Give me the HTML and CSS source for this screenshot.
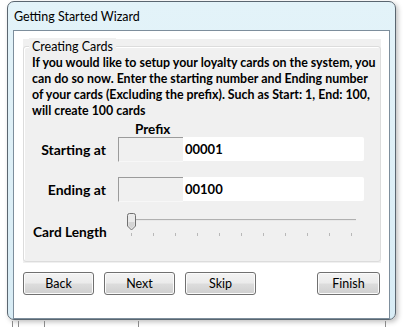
FILE: index.html
```html
<!DOCTYPE html>
<html lang="en">
<head>
  <meta charset="UTF-8">
  <title>Getting Started Wizard</title>
  <link rel="stylesheet" href="styles.css">
</head>
<body>

<div class="window">
  <div class="title-bar">Getting Started Wizard</div>

  <div class="client">
    <div class="group">
      <div class="group-frame">
        <div class="group-legend">Creating Cards</div>

        <p class="intro">
          If you would like to setup your loyalty cards on the system, you<br>
          can do so now. Enter the starting number and Ending number<br>
          of your cards (Excluding the prefix). Such as Start: 1, End: 100,<br>
          will create 100 cards
        </p>

        <div class="prefix-head">Prefix</div>

        <div class="field-row">
          <label class="field-label">Starting at</label>
          <div class="prefix-box"></div>
          <input class="value-box" type="text" value="00001">
        </div>

        <div class="field-row">
          <label class="field-label">Ending at</label>
          <div class="prefix-box"></div>
          <input class="value-box" type="text" value="00100">
        </div>

        <div class="slider-row">
          <span class="slider-label">Card Length</span>
          <div class="slider">
            <div class="slider-track"></div>
            <div class="slider-thumb">
              <svg width="11" height="18" viewBox="0 0 11 18">
                <path d="M1.5 2.5 Q1.5 0.5 3.5 0.5 L7.5 0.5 Q9.5 0.5 9.5 2.5 L9.5 13 L5.5 17 L1.5 13 Z" fill="#eaeaea" stroke="#707070"/>
                <path d="M2.5 9 L8.5 9 L8.5 12.6 L5.5 15.6 L2.5 12.6 Z" fill="#d4d4d4"/>
              </svg>
            </div>
            <div class="slider-ticks">
              <i></i><i></i><i></i><i></i><i></i><i></i><i></i><i></i><i></i><i></i><i></i>
            </div>
          </div>
        </div>
      </div>
    </div>

    <div class="buttons">
      <button class="btn">Back</button>
      <button class="btn">Next</button>
      <button class="btn">Skip</button>
      <span class="spacer"></span>
      <button class="btn btn-finish">Finish</button>
    </div>
  </div>
</div>

<div class="parent-strip">
  <i style="left:12px"></i><i style="left:18px"></i><i style="left:44px"></i><i style="left:138px"></i><i style="left:385px"></i>
</div>

</body>
</html>
```

FILE: styles.css
```css
body {
  margin: 0;
  background-color: #ffffff;
  font-family: Lato, "Noto Sans", sans-serif;
  font-size: 12.5px;
  color: #000;
  width: 413px;
  height: 327px;
  overflow: hidden;
}
.window {
  margin: 1px 0 0 7px;
  width: 387px;
  height: 317px;
  border: 1px solid #5a6670;
  border-radius: 7px;
  background: linear-gradient(to bottom, #e3f3f9 0%, #dff0f7 40%, #d8ecf5 100%);
  box-shadow: 2px 2px 5px rgba(0,0,0,0.25);
}
.title-bar {
  height: 28px;
  padding-left: 6px;
  line-height: 29px;
  font-size: 12.5px;
  color: #000;
}
.client {
  margin: 0 5px;
  height: 279px;
  border: 1px solid #7d8e9c;
  background-color: #ffffff;
  padding: 8px 8px 0 9px;
}
.group {
  height: 224px;
  background-color: #f0f0f0;
  padding-top: 7px;
  box-sizing: border-box;
}
.group-frame {
  position: relative;
  height: 216px;
  box-sizing: border-box;
  border: 1px solid #dcdcdc;
  border-radius: 3px;
  box-shadow: inset 1px 1px 0 #fff;
  padding: 0 0 0 8px;
}
.group-legend {
  position: absolute;
  top: -9px;
  left: 5px;
  padding: 0 3px;
  background-color: #f0f0f0;
  line-height: 17px;
}
.intro {
  margin: 8px 0 0;
  font-weight: bold;
  font-size: 12.4px;
  line-height: 16px;
  white-space: nowrap;
}
.prefix-head {
  margin: 2px 0 0 103px;
  font-weight: bold;
  font-size: 13.5px;
  line-height: 16px;
}
.field-row {
  display: flex;
  align-items: center;
  height: 24px;
}
.field-row + .field-row {
  margin-top: 16px;
}
.field-label {
  width: 74px;
  margin-right: 12px;
  text-align: right;
  font-weight: bold;
  font-size: 14px;
}
.prefix-box {
  width: 64px;
  height: 23px;
  background-color: #f0f0f0;
  border-top: 1px solid #9b9b9b;
  border-left: 1px solid #9b9b9b;
  border-bottom: 1px solid #f7f7f7;
}
.value-box {
  width: 181px;
  height: 24px;
  box-sizing: border-box;
  margin: 0;
  border: none;
  border-radius: 0 2px 2px 0;
  background-color: #fff;
  font-family: inherit;
  font-weight: bold;
  font-size: 13px;
  padding: 0 2px;
  outline: none;
}
.slider-row {
  display: flex;
  align-items: flex-start;
  margin-top: 12px;
}
.slider-label {
  width: 93px;
  padding: 10px 0 0 1px;
  font-weight: bold;
  font-size: 13.7px;
  line-height: 17px;
}
.slider {
  position: relative;
  width: 230px;
  height: 26px;
}
.slider-track {
  position: absolute;
  left: 3px;
  right: 0;
  top: 6px;
  height: 1px;
  background-color: #b0b0b0;
  border-bottom: 1px solid #e8e8e8;
}
.slider-thumb {
  position: absolute;
  left: 0;
  top: 0;
  line-height: 0;
}
.slider-ticks {
  position: absolute;
  left: 5px;
  top: 20px;
  display: flex;
  gap: 21px;
}
.slider-ticks i {
  display: block;
  width: 1px;
  height: 3px;
  background-color: #b8b8b8;
}
.buttons {
  display: flex;
  gap: 10px;
  margin-top: 9px;
  padding-right: 1px;
}
.spacer {
  flex: 1;
}
.btn {
  width: 71px;
  height: 23px;
  margin: 0;
  border: 1px solid #707070;
  border-radius: 3px;
  background: linear-gradient(to bottom, #f3f3f3 0%, #ebebeb 49%, #dddddd 51%, #cfcfcf 100%);
  box-shadow: inset 0 0 0 1px #fbfbfb;
  font-family: inherit;
  font-size: 12.5px;
  color: #000;
  padding: 0;
}
.btn-finish {
  width: 63px;
}
.parent-strip {
  position: relative;
  height: 7px;
  margin-top: 1px;
}
.parent-strip i {
  position: absolute;
  top: 0;
  bottom: 0;
  width: 1px;
  background-color: #8a8a8a;
}
```
